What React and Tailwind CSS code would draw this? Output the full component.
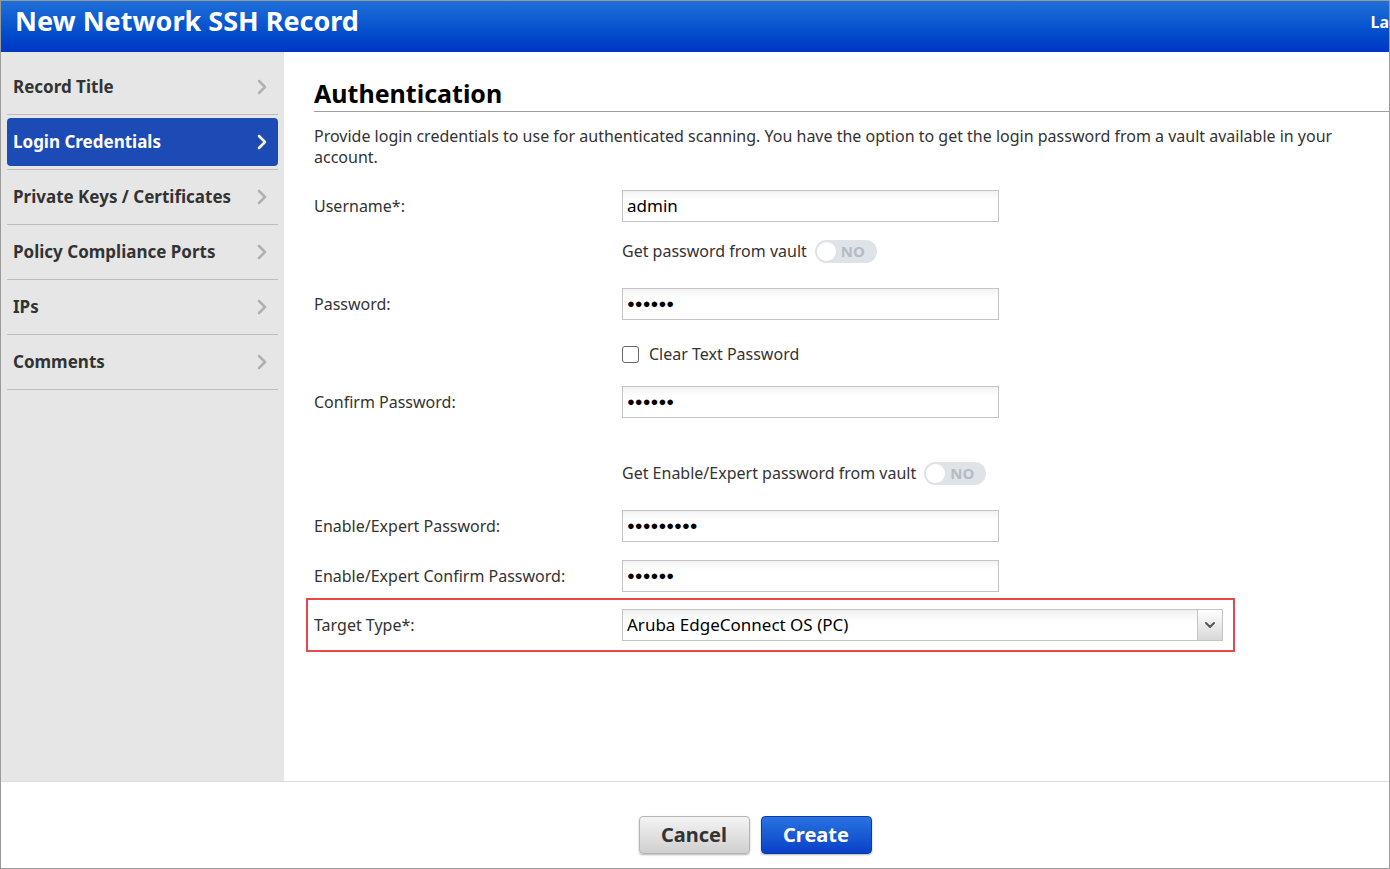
import { ChevronRight, ChevronDown } from 'lucide-react';

const navItems = ['Record Title', 'Login Credentials', 'Private Keys / Certificates', 'Policy Compliance Ports', 'IPs', 'Comments'];

function TextInput({ value }) {
  return (
    <div className="flex h-8 w-[377px] items-center border border-[#c4c4c4] bg-gradient-to-b from-[#f2f2f2] to-white to-[30%] px-1 text-[17px] text-black">
      {value}
    </div>
  );
}

function Dots({ n }) {
  return <span className="text-[13px] tracking-[0px]">{'●'.repeat(n)}</span>;
}

function Toggle({ label }) {
  return (
    <div className="flex items-center gap-2">
      <span>{label}</span>
      <div className="flex h-[23px] w-[62px] items-center rounded-full bg-[#dfe3e8] px-[2px]">
        <div className="h-[19px] w-[19px] rounded-full bg-white" />
        <span className="ml-[5px] text-[15px] font-bold text-[#b3bcc6]">NO</span>
      </div>
    </div>
  );
}

function Row({ label, children, className = '' }) {
  return (
    <div className={`flex items-center ${className}`}>
      <div className="w-[308px] shrink-0">{label}</div>
      {children}
    </div>
  );
}

export default function App() {
  return (
    <div className="flex h-[869px] w-[1390px] flex-col overflow-hidden border border-[#9a9a9a] bg-white font-[family-name:'Liberation_Sans',Arial,sans-serif] text-[#333]">
      <header className="flex h-[51px] shrink-0 items-start justify-between bg-gradient-to-b from-[#1f6fd8] to-[#0035c4] pl-[14px] pt-[3px] text-white">
        <h1 className="text-[27px] font-bold leading-[34px]">New Network SSH Record</h1>
        <span className="pt-[6px] text-[16px] font-bold">La</span>
      </header>

      <div className="flex flex-1">
        <aside className="w-[283px] shrink-0 bg-[#e6e6e6] px-[6px] pt-[8px]">
          {navItems.map((item) => {
            const active = item === 'Login Credentials';
            return (
              <div key={item} className="border-b border-[#bdbdbd] py-[3px]">
                <div
                  className={`flex h-[48px] items-center justify-between rounded-[4px] pl-[6px] pr-[4px] text-[17px] font-bold ${
                    active ? 'bg-[#1c4bb5] text-white' : 'text-[#333]'
                  }`}
                >
                  {item}
                  <ChevronRight className={`h-6 w-6 ${active ? 'text-white' : 'text-[#b0b0b0]'}`} strokeWidth={2.5} />
                </div>
              </div>
            );
          })}
        </aside>

        <main className="flex-1 pl-[30px] pt-[26px] text-[16px] text-[#333]">
          <h2 className="border-b border-[#9e9e9e] pb-[3px] text-[25px] font-bold leading-[30px] text-black">Authentication</h2>
          <p className="mt-[14px] text-[16px] leading-[21px]">
            Provide login credentials to use for authenticated scanning. You have the option to get the login password from a vault available in your account.
          </p>

          <div className="mt-[22px] flex flex-col">
            <Row label="Username*:" className="h-8">
              <TextInput value="admin" />
            </Row>
            <Row className="mt-[17px] h-6">
              <Toggle label="Get password from vault" />
            </Row>
            <Row label="Password:" className="mt-[25px] h-8">
              <TextInput value={<Dots n={6} />} />
            </Row>
            <Row className="mt-[22px] h-6">
              <label className="flex items-center gap-[10px]">
                <span className="h-[17px] w-[17px] rounded-[3px] border border-[#666] bg-white" />
                Clear Text Password
              </label>
            </Row>
            <Row label="Confirm Password:" className="mt-[20px] h-8">
              <TextInput value={<Dots n={6} />} />
            </Row>
            <Row className="mt-[43px] h-6">
              <Toggle label="Get Enable/Expert password from vault" />
            </Row>
            <Row label="Enable/Expert Password:" className="mt-[25px] h-8">
              <TextInput value={<Dots n={9} />} />
            </Row>
            <Row label="Enable/Expert Confirm Password:" className="mt-[18px] h-8">
              <TextInput value={<Dots n={6} />} />
            </Row>
            <div className="-ml-[8px] mt-[6px] flex h-[54px] w-[929px] items-center border-2 border-[#e84848] pl-[6px]">
              <div className="w-[308px] shrink-0">Target Type*:</div>
              <div className="flex h-8 w-[601px] items-center justify-between border border-[#c4c4c4] bg-gradient-to-b from-[#f0f0f0] to-white to-[40%] pl-1 text-[17px] text-black">
                Aruba EdgeConnect OS (PC)
                <div className="flex h-full w-[25px] items-center justify-center border-l border-[#c4c4c4] bg-gradient-to-b from-white to-[#d8d8d8]">
                  <ChevronDown className="h-4 w-4 text-[#555]" strokeWidth={3} />
                </div>
              </div>
            </div>
          </div>
        </main>
      </div>

      <footer className="flex h-[87px] shrink-0 items-center justify-center gap-[11px] border-t border-[#dcdcdc] bg-white pl-[120px] pt-[20px]">
        <button className="h-[38px] w-[111px] rounded-[4px] border border-[#b5b5b5] bg-gradient-to-b from-[#f4f4f4] to-[#cfcfcf] text-[20px] font-bold text-[#333] shadow-[0_1px_2px_rgba(0,0,0,0.3)]">
          Cancel
        </button>
        <button className="h-[38px] w-[111px] rounded-[4px] border border-[#0a3aa8] bg-gradient-to-b from-[#2a72e0] to-[#0a40c8] text-[20px] font-bold text-white shadow-[0_1px_2px_rgba(0,0,0,0.3)]">
          Create
        </button>
      </footer>
    </div>
  );
}
